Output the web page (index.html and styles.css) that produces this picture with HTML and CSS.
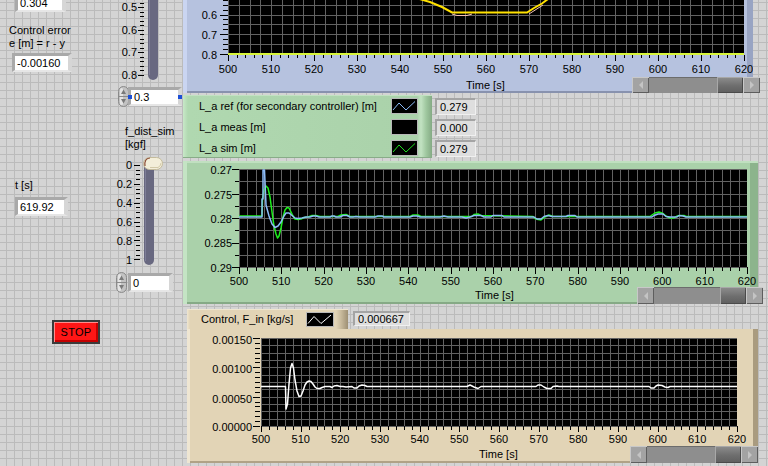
FILE: index.html
```html
<!DOCTYPE html>
<html lang="en">
<head>
<meta charset="utf-8">
<title>Front Panel</title>
<link rel="stylesheet" href="styles.css">
</head>
<body>
<main class="fp">
  <section class="left">
    <div class="colA">
      <div class="num n-top">0.304</div>
      <div class="lbl l-err">Control error<br>e [m] = r - y</div>
      <div class="num n-err">-0.00160</div>
      <div class="lbl l-t">t [s]</div>
      <div class="num n-t">619.92</div>
      <button class="stop" type="button">STOP</button>
    </div>
    <div class="colB">
      <svg class="sl" width="73" height="82" viewBox="110 0 73 82">
        <text x="137" y="11" text-anchor="end">0.5</text>
        <text x="137" y="33.5" text-anchor="end">0.6</text>
        <text x="137" y="56" text-anchor="end">0.7</text>
        <text x="137" y="78.5" text-anchor="end">0.8</text>
        <path class="tk" d="M138 7.5h6M138 30h6M138 52.5h6M138 75h6"/>
        <path class="tk" d="M140 3h4m-4 4.5h4m-4 4.5h4m-4 4.5h4m-4 4.5h4m-4 4.5h4m-4 4.5h4m-4 4.5h4m-4 4.5h4m-4 4.5h4m-4 4.5h4m-4 4.5h4m-4 4.5h4m-4 4.5h4m-4 4.5h4m-4 4.5h4m-4 4.5h4"/>
        <rect x="148" y="-6" width="10" height="86" rx="5" fill="#686880"/>
        <rect x="149" y="-6" width="1" height="81" fill="#7e7e98"/>
      </svg>
      <div class="dig dig1">
        <svg class="ids" width="11" height="21" viewBox="0 0 11 21">
          <rect x="0.5" y="0.5" width="10" height="20" rx="5" fill="#c2c2c2" stroke="#8a8a8a"/>
          <rect x="2" y="2" width="3" height="17" rx="1.5" fill="#e4e4e4"/>
          <path d="M5.5 3.5L8 8H3Z" fill="#7a7a7a"/>
          <path d="M5.5 17.5L8 13H3Z" fill="#7a7a7a"/>
          <path d="M1 10.5H10" stroke="#8a8a8a"/>
        </svg>
        <div class="num n-d1 sel">0.3</div>
      </div>
      <div class="lbl l-fd">f_dist_sim<br>[kgf]</div>
      <svg class="sl sl2" width="73" height="113" viewBox="110 155 73 113">
        <text x="132" y="169" text-anchor="end">0</text>
        <text x="132" y="188" text-anchor="end">0.2</text>
        <text x="132" y="207" text-anchor="end">0.4</text>
        <text x="132" y="226" text-anchor="end">0.6</text>
        <text x="132" y="245" text-anchor="end">0.8</text>
        <text x="132" y="263.5" text-anchor="end">1</text>
        <path class="tk" d="M134 165.5h6m-6 18.87h6m-6 18.87h6m-6 18.87h6m-6 18.87h6m-6 18.87h6"/>
        <path class="tk" d="M136 165.5h4m-4 4.717h4m-4 4.717h4m-4 4.717h4m-4 4.717h4m-4 4.717h4m-4 4.717h4m-4 4.717h4m-4 4.717h4m-4 4.717h4m-4 4.717h4m-4 4.717h4m-4 4.717h4m-4 4.717h4m-4 4.717h4m-4 4.717h4m-4 4.717h4m-4 4.717h4m-4 4.717h4m-4 4.717h4m-4 4.717h4"/>
        <rect x="144" y="160" width="10" height="105" rx="5" fill="#686880"/>
        <rect x="145" y="166" width="1" height="95" fill="#7e7e98"/>
        <rect x="143.5" y="157.5" width="19" height="12" rx="6" fill="#f3eed9" stroke="#c4bb9c"/>
        <path d="M145 166Q144 158.5 150 158" fill="none" stroke="#8a4a36" stroke-width="1.2"/>
        <path d="M150 167.5H158Q161 166 161 163" fill="none" stroke="#d2c9a8"/>
      </svg>
      <div class="dig dig2">
        <svg class="ids" width="11" height="21" viewBox="0 0 11 21">
          <rect x="0.5" y="0.5" width="10" height="20" rx="5" fill="#c2c2c2" stroke="#8a8a8a"/>
          <rect x="2" y="2" width="3" height="17" rx="1.5" fill="#e4e4e4"/>
          <path d="M5.5 3.5L8 8H3Z" fill="#7a7a7a"/>
          <path d="M5.5 17.5L8 13H3Z" fill="#7a7a7a"/>
          <path d="M1 10.5H10" stroke="#8a8a8a"/>
        </svg>
        <div class="num n-d2">0</div>
      </div>
    </div>
  </section>

  <section class="right">
    <div class="graph g-blue">
      <svg class="chart" width="570" height="77" viewBox="183 0 570 77">
        <rect x="228" y="0" width="516" height="55" fill="#000"/>
        <path class="grid" d="M228.5 0V54m10.75 -54v54m10.75 -54v54m10.75 -54v54m10.75 -54v54m10.75 -54v54m10.75 -54v54m10.75 -54v54m10.75 -54v54m10.75 -54v54m10.75 -54v54m10.75 -54v54m10.75 -54v54m10.75 -54v54m10.75 -54v54m10.75 -54v54m10.75 -54v54m10.75 -54v54m10.75 -54v54m10.75 -54v54m10.75 -54v54m10.75 -54v54m10.75 -54v54m10.75 -54v54m10.75 -54v54m10.75 -54v54m10.75 -54v54m10.75 -54v54m10.75 -54v54m10.75 -54v54m10.75 -54v54m10.75 -54v54m10.75 -54v54m10.75 -54v54m10.75 -54v54m10.75 -54v54m10.75 -54v54m10.75 -54v54m10.75 -54v54m10.75 -54v54m10.75 -54v54m10.75 -54v54m10.75 -54v54m10.75 -54v54m10.75 -54v54m10.75 -54v54m10.75 -54v54m10.75 -54v54M228 44.6H744M228 34.75H744M228 24.9H744M228 15H744M228 5.1H744"/>
        <path class="tk" d="M220 54.5h8M220 34.75h8M220 15h8"/>
        <path class="tk" d="M223 54.5h5m-5 -4.9375h5m-5 -4.9375h5m-5 -4.9375h5m-5 -4.9375h5m-5 -4.9375h5m-5 -4.9375h5m-5 -4.9375h5m-5 -4.9375h5m-5 -4.9375h5m-5 -4.9375h5m-5 -4.9375h5"/>
        <path class="tk" d="M228.5 55v3m8.6 -3v3m8.6 -3v3m8.6 -3v3m8.6 -3v3m8.6 -3v3m8.6 -3v3m8.6 -3v3m8.6 -3v3m8.6 -3v3m8.6 -3v3m8.6 -3v3m8.6 -3v3m8.6 -3v3m8.6 -3v3m8.6 -3v3m8.6 -3v3m8.6 -3v3m8.6 -3v3m8.6 -3v3m8.6 -3v3m8.6 -3v3m8.6 -3v3m8.6 -3v3m8.6 -3v3m8.6 -3v3m8.6 -3v3m8.6 -3v3m8.6 -3v3m8.6 -3v3m8.6 -3v3m8.6 -3v3m8.6 -3v3m8.6 -3v3m8.6 -3v3m8.6 -3v3m8.6 -3v3m8.6 -3v3m8.6 -3v3m8.6 -3v3m8.6 -3v3m8.6 -3v3m8.6 -3v3m8.6 -3v3m8.6 -3v3m8.6 -3v3m8.6 -3v3m8.6 -3v3m8.6 -3v3m8.6 -3v3m8.6 -3v3m8.6 -3v3m8.6 -3v3m8.6 -3v3m8.6 -3v3m8.6 -3v3m8.6 -3v3m8.6 -3v3m8.6 -3v3m8.6 -3v3"/>
        <path class="tk" d="M228.5 55v6m43 -6v6m43 -6v6m43 -6v6m43 -6v6m43 -6v6m43 -6v6m43 -6v6m43 -6v6m43 -6v6m43 -6v6m43 -6v6m43 -6v6"/>
        <text x="217" y="19" text-anchor="end">0.6</text>
        <text x="217" y="38.5" text-anchor="end">0.7</text>
        <text x="217" y="58.5" text-anchor="end">0.8</text>
        <g text-anchor="middle">
          <text x="228" y="73">500</text><text x="271" y="73">510</text><text x="314" y="73">520</text><text x="357" y="73">530</text><text x="400" y="73">540</text><text x="443" y="73">550</text><text x="486" y="73">560</text><text x="529" y="73">570</text><text x="572" y="73">580</text><text x="615" y="73">590</text><text x="658" y="73">600</text><text x="701" y="73">610</text><text x="744" y="73">620</text>
        </g>
        <rect x="228" y="53" width="516" height="2" fill="#d8f53a"/>
        <polyline points="416,-2 430,2 442,7 452,12.5 527,12.5 534,8 542,3.5 548,-1" fill="none" stroke="#ffe100" stroke-width="2"/>
        <polyline points="452,14 457,15.5 467,15.5 472,14" fill="none" stroke="#f4c0b4" stroke-width="1"/>
        <polyline points="529,14 536,9.5 543,5" fill="none" stroke="#f4c0b4" stroke-width="1"/>
      </svg>
      <div class="gfoot">
        <span class="xl">Time [s]</span>
        <div class="sb"><span class="sbb l"></span><span class="sbt"><span class="thumb"></span></span><span class="sbb r"></span></div>
      </div>
    </div>

    <div class="legrow">
      <div class="legend">
        <div class="lrow"><span>L_a ref (for secondary controller) [m]</span>
          <svg class="licon" width="27" height="16" viewBox="0 0 27 16"><rect width="27" height="16" fill="#000"/><rect x="0.5" y="0.5" width="26" height="15" fill="none" stroke="#b8b8b8"/><polyline points="2,12 8,5 15,12 24,3.5" fill="none" stroke="#8cbcf8"/></svg></div>
        <div class="lrow"><span>L_a meas [m]</span>
          <svg class="licon" width="27" height="16" viewBox="0 0 27 16"><rect width="27" height="16" fill="#000"/><rect x="0.5" y="0.5" width="26" height="15" fill="none" stroke="#b8b8b8"/></svg></div>
        <div class="lrow"><span>L_a sim [m]</span>
          <svg class="licon" width="27" height="16" viewBox="0 0 27 16"><rect width="27" height="16" fill="#000"/><rect x="0.5" y="0.5" width="26" height="15" fill="none" stroke="#b8b8b8"/><polyline points="2,12 8,5 15,12 24,3.5" fill="none" stroke="#1ee01e"/></svg></div>
      </div>
      <div class="legvals">
        <div class="numg">0.279</div>
        <div class="numg">0.000</div>
        <div class="numg">0.279</div>
      </div>
    </div>

    <div class="graph g-green">
      <svg class="chart" width="575" height="126" viewBox="183 161 575 126">
        <rect x="239" y="169" width="508" height="98" fill="#000"/>
        <path class="grid" d="M239.5 169V267m8.4667 -98v98m8.4667 -98v98m8.4667 -98v98m8.4667 -98v98m8.4667 -98v98m8.4667 -98v98m8.4667 -98v98m8.4667 -98v98m8.4667 -98v98m8.4667 -98v98m8.4667 -98v98m8.4667 -98v98m8.4667 -98v98m8.4667 -98v98m8.4667 -98v98m8.4667 -98v98m8.4667 -98v98m8.4667 -98v98m8.4667 -98v98m8.4667 -98v98m8.4667 -98v98m8.4667 -98v98m8.4667 -98v98m8.4667 -98v98m8.4667 -98v98m8.4667 -98v98m8.4667 -98v98m8.4667 -98v98m8.4667 -98v98m8.4667 -98v98m8.4667 -98v98m8.4667 -98v98m8.4667 -98v98m8.4667 -98v98m8.4667 -98v98m8.4667 -98v98m8.4667 -98v98m8.4667 -98v98m8.4667 -98v98m8.4667 -98v98m8.4667 -98v98m8.4667 -98v98m8.4667 -98v98m8.4667 -98v98m8.4667 -98v98m8.4667 -98v98m8.4667 -98v98m8.4667 -98v98m8.4667 -98v98m8.4667 -98v98m8.4667 -98v98m8.4667 -98v98m8.4667 -98v98m8.4667 -98v98m8.4667 -98v98m8.4667 -98v98m8.4667 -98v98m8.4667 -98v98m8.4667 -98v98M239 169.5h508m-508 12.25h508m-508 12.25h508m-508 12.25h508m-508 12.25h508m-508 12.25h508m-508 12.25h508m-508 12.25h508m-508 12.25h508"/>
        <path class="tk" d="M232 169.5h7m-7 24.5h7m-7 24.5h7m-7 24.5h7m-7 24.5h7"/>
        <path class="tk" d="M235 181.75h4m-4 24.5h4m-4 24.5h4m-4 24.5h4"/>
        <path class="tk" d="M239.5 267v4m8.4667 -4v4m8.4667 -4v4m8.4667 -4v4m8.4667 -4v4m8.4667 -4v4m8.4667 -4v4m8.4667 -4v4m8.4667 -4v4m8.4667 -4v4m8.4667 -4v4m8.4667 -4v4m8.4667 -4v4m8.4667 -4v4m8.4667 -4v4m8.4667 -4v4m8.4667 -4v4m8.4667 -4v4m8.4667 -4v4m8.4667 -4v4m8.4667 -4v4m8.4667 -4v4m8.4667 -4v4m8.4667 -4v4m8.4667 -4v4m8.4667 -4v4m8.4667 -4v4m8.4667 -4v4m8.4667 -4v4m8.4667 -4v4m8.4667 -4v4m8.4667 -4v4m8.4667 -4v4m8.4667 -4v4m8.4667 -4v4m8.4667 -4v4m8.4667 -4v4m8.4667 -4v4m8.4667 -4v4m8.4667 -4v4m8.4667 -4v4m8.4667 -4v4m8.4667 -4v4m8.4667 -4v4m8.4667 -4v4m8.4667 -4v4m8.4667 -4v4m8.4667 -4v4m8.4667 -4v4m8.4667 -4v4m8.4667 -4v4m8.4667 -4v4m8.4667 -4v4m8.4667 -4v4m8.4667 -4v4m8.4667 -4v4m8.4667 -4v4m8.4667 -4v4m8.4667 -4v4m8.4667 -4v4"/>
        <path class="tk" d="M239.5 267v7m42.333 -7v7m42.333 -7v7m42.333 -7v7m42.333 -7v7m42.333 -7v7m42.333 -7v7m42.333 -7v7m42.333 -7v7m42.333 -7v7m42.333 -7v7m42.333 -7v7m42.333 -7v7"/>
        <g text-anchor="end">
          <text x="232" y="174">0.27</text><text x="232" y="198.5">0.275</text><text x="232" y="222.5">0.28</text><text x="232" y="247">0.285</text><text x="232" y="271.5">0.29</text>
        </g>
        <g text-anchor="middle">
          <text x="239" y="285">500</text><text x="281.3" y="285">510</text><text x="323.7" y="285">520</text><text x="366" y="285">530</text><text x="408.3" y="285">540</text><text x="450.7" y="285">550</text><text x="493" y="285">560</text><text x="535.3" y="285">570</text><text x="577.7" y="285">580</text><text x="620" y="285">590</text><text x="662.3" y="285">600</text><text x="704.7" y="285">610</text><text x="747" y="285">620</text>
        </g>
        <polyline class="tr" stroke="#1ef01e" stroke-width="1.5" points="239,216 262,216 262.5,199 264,190 266,186 268,188 270,197 272,212 274,226 276,234 277.5,238 279,236 281,228 283,217 285,210 287,207.5 289,208 291,212 293,216 295,219 298,219.5 301,219 304,217.5 308,217 312,215.5 316,215.5 320,216.5 338,216.5 341,215 346,214.5 350,216.5 410,216.5 413,215 418,215 421,216.5 472,216.5 474,214.5 478,214 481,215.5 533,216.5 535,218.5 538,219.5 541,220 545,217 549,215 553,216.5 650,216.5 652,215 655,213 659,212 663,213.5 666,216 670,218 674,218 677,216 680,215.5 684,215.5 686,216.5 747,216.5"/>
        <polyline class="tr" stroke="#8cbcf8" stroke-width="1.5" points="239,217 262,217 262,199 263,199 263,170 264.5,170 266,205 269,216 272,224 275,227.5 278,226 281,222 284,216 286,213 289,213 292,215.5 295,218 298,218.5 302,218 306,217 310,217 313,216 316,216 319,217 330,217 332,216 334,216 336,217 340,217 343,215.5 347,215.5 350,217 353,217 356,216.5 360,217 375,217 378,216 382,216 384,217 410,217 413,216 417,216 420,217 440,217 444,216 448,217 462,217 466,218 470,217 474,215.5 481,215.5 484,217 491,217 493,215.5 502,215.5 504,217 534,217 537,219 541,219 544,216.5 548,215.5 552,216.5 566,216.5 568,215.5 575,215.5 577,217 652,217 654,215.5 658,214 663,214 666,216.5 670,217 677,217 679,215.5 683,216 686,217 747,217"/>
      </svg>
      <div class="gfoot">
        <span class="xl">Time [s]</span>
        <div class="sb"><span class="sbb l"></span><span class="sbt"><span class="thumb"></span></span><span class="sbb r"></span></div>
      </div>
    </div>

    <div class="ctrlhead">
      <div class="tab"><span>Control, F_in [kg/s]</span>
        <svg class="licon" width="28" height="15" viewBox="0 0 28 15"><rect width="28" height="15" fill="#000"/><rect x="0.5" y="0.5" width="27" height="14" fill="none" stroke="#b8b8b8"/><polyline points="2,11.5 8,4.5 15,11.5 25,3" fill="none" stroke="#ffffff"/></svg>
      </div>
      <div class="numg nctl">0.000667</div>
    </div>

    <div class="graph g-tan">
      <svg class="chart" width="571" height="117" viewBox="187 329 571 117">
        <rect x="261" y="338" width="476" height="88" fill="#000"/>
        <path class="grid" d="M261.5 338V426m7.9333 -88v88m7.9333 -88v88m7.9333 -88v88m7.9333 -88v88m7.9333 -88v88m7.9333 -88v88m7.9333 -88v88m7.9333 -88v88m7.9333 -88v88m7.9333 -88v88m7.9333 -88v88m7.9333 -88v88m7.9333 -88v88m7.9333 -88v88m7.9333 -88v88m7.9333 -88v88m7.9333 -88v88m7.9333 -88v88m7.9333 -88v88m7.9333 -88v88m7.9333 -88v88m7.9333 -88v88m7.9333 -88v88m7.9333 -88v88m7.9333 -88v88m7.9333 -88v88m7.9333 -88v88m7.9333 -88v88m7.9333 -88v88m7.9333 -88v88m7.9333 -88v88m7.9333 -88v88m7.9333 -88v88m7.9333 -88v88m7.9333 -88v88m7.9333 -88v88m7.9333 -88v88m7.9333 -88v88m7.9333 -88v88m7.9333 -88v88m7.9333 -88v88m7.9333 -88v88m7.9333 -88v88m7.9333 -88v88m7.9333 -88v88m7.9333 -88v88m7.9333 -88v88m7.9333 -88v88m7.9333 -88v88m7.9333 -88v88m7.9333 -88v88m7.9333 -88v88m7.9333 -88v88m7.9333 -88v88m7.9333 -88v88m7.9333 -88v88m7.9333 -88v88m7.9333 -88v88m7.9333 -88v88M261 338.5h476m-476 7.3333h476m-476 7.3333h476m-476 7.3333h476m-476 7.3333h476m-476 7.3333h476m-476 7.3333h476m-476 7.3333h476m-476 7.3333h476m-476 7.3333h476m-476 7.3333h476m-476 7.3333h476m-476 7.3333h476"/>
        <path class="tk" d="M253 338.5h7m-7 29.333h7m-7 29.333h7m-7 29.333h7"/>
        <path class="tk" d="M255 338.5h5m-5 4.8889h5m-5 4.8889h5m-5 4.8889h5m-5 4.8889h5m-5 4.8889h5m-5 4.8889h5m-5 4.8889h5m-5 4.8889h5m-5 4.8889h5m-5 4.8889h5m-5 4.8889h5m-5 4.8889h5m-5 4.8889h5m-5 4.8889h5m-5 4.8889h5m-5 4.8889h5m-5 4.8889h5m-5 4.8889h5"/>
        <path class="tk" d="M261.5 426v4m7.9333 -4v4m7.9333 -4v4m7.9333 -4v4m7.9333 -4v4m7.9333 -4v4m7.9333 -4v4m7.9333 -4v4m7.9333 -4v4m7.9333 -4v4m7.9333 -4v4m7.9333 -4v4m7.9333 -4v4m7.9333 -4v4m7.9333 -4v4m7.9333 -4v4m7.9333 -4v4m7.9333 -4v4m7.9333 -4v4m7.9333 -4v4m7.9333 -4v4m7.9333 -4v4m7.9333 -4v4m7.9333 -4v4m7.9333 -4v4m7.9333 -4v4m7.9333 -4v4m7.9333 -4v4m7.9333 -4v4m7.9333 -4v4m7.9333 -4v4m7.9333 -4v4m7.9333 -4v4m7.9333 -4v4m7.9333 -4v4m7.9333 -4v4m7.9333 -4v4m7.9333 -4v4m7.9333 -4v4m7.9333 -4v4m7.9333 -4v4m7.9333 -4v4m7.9333 -4v4m7.9333 -4v4m7.9333 -4v4m7.9333 -4v4m7.9333 -4v4m7.9333 -4v4m7.9333 -4v4m7.9333 -4v4m7.9333 -4v4m7.9333 -4v4m7.9333 -4v4m7.9333 -4v4m7.9333 -4v4m7.9333 -4v4m7.9333 -4v4m7.9333 -4v4m7.9333 -4v4m7.9333 -4v4"/>
        <path class="tk" d="M261.5 426v6m39.667 -6v6m39.667 -6v6m39.667 -6v6m39.667 -6v6m39.667 -6v6m39.667 -6v6m39.667 -6v6m39.667 -6v6m39.667 -6v6m39.667 -6v6m39.667 -6v6m39.667 -6v6"/>
        <g text-anchor="end">
          <text x="252" y="344">0.00150</text><text x="252" y="373.3">0.00100</text><text x="252" y="402.7">0.00050</text><text x="252" y="430.5">0.00000</text>
        </g>
        <g text-anchor="middle">
          <text x="261" y="442.5">500</text><text x="300.7" y="442.5">510</text><text x="340.3" y="442.5">520</text><text x="380" y="442.5">530</text><text x="419.7" y="442.5">540</text><text x="459.3" y="442.5">550</text><text x="499" y="442.5">560</text><text x="538.7" y="442.5">570</text><text x="578.3" y="442.5">580</text><text x="618" y="442.5">590</text><text x="657.7" y="442.5">600</text><text x="697.3" y="442.5">610</text><text x="737" y="442.5">620</text>
        </g>
        <polyline class="tr" stroke="#ffffff" stroke-width="1.5" points="261,386.5 285.5,386.5 286,409 287.5,404 289,384 290.5,368 292,363.5 293.5,368 295,380 297,391 299,396.5 301,396 303,391 305,385 307,382 309,381 311,381.5 313,384 315,387 317,388.5 320,388.5 322,387.5 325,386.5 330,386.5 332,387.5 334,386 337,385.5 340,386.5 343,386.5 346,387 352,386.5 354,388 357,388 359,386 362,385 365,385.5 367,386.5 467,386.5 470,385 474,387 478,388.5 481,386.5 536,386.5 538,385 541,385 544,387 547,388.5 551,388.5 553,386.5 557,386 559,386.5 649,386.5 651,388 654,388 656,386 658,385 662,385.5 665,387 668,387.5 670,386.5 737,386.5"/>
      </svg>
      <div class="gfoot">
        <span class="xl">Time [s]</span>
        <div class="sb"><span class="sbb l"></span><span class="sbt"><span class="thumb"></span></span><span class="sbb r"></span></div>
      </div>
    </div>
  </section>
</main>
</body>
</html>
```

FILE: styles.css
```css
* { box-sizing: border-box; }
html, body { margin: 0; padding: 0; }
body {
  width: 768px;
  height: 466px;
  overflow: hidden;
  font: 11px/13px "Liberation Sans", Arial, sans-serif;
  color: #000;
  background-color: #d4d4d4;
  background-image:
    linear-gradient(#bbbbbb 1px, transparent 1px),
    linear-gradient(90deg, #bbbbbb 1px, transparent 1px);
  background-size: 8px 8px;
  background-position: 6px 2px;
}
svg text {
  font-family: "Liberation Sans", Arial, sans-serif;
  font-size: 11px;
  fill: #000;
}
.tk { stroke: #000; stroke-width: 1; fill: none; shape-rendering: crispEdges; }
.grid { stroke: #626262; stroke-width: 1; fill: none; shape-rendering: crispEdges; }
.tr { fill: none; stroke-linejoin: round; }

.fp { display: flex; width: 768px; height: 466px; }

/* left controls */
.left { width: 183px; flex: none; display: flex; }
.colA { width: 110px; flex: none; display: flex; flex-direction: column; align-items: flex-start; }
.colB { width: 73px; flex: none; display: flex; flex-direction: column; align-items: flex-start; }
.lbl { white-space: nowrap; line-height: 13px; }

.num {
  height: 19px;
  border-style: solid;
  border-width: 3px 4px 2px 3px;
  border-color: #a9a9a9 #d6d6d6 #e6e6e6 #a9a9a9;
  background: #fff;
  padding-left: 2px;
  line-height: 14px;
  white-space: nowrap;
  position: relative;
}
.n-top { width: 51px; margin: -7px 0 0 15px; }
.l-err { margin: 12px 0 0 9px; }
.n-err { width: 60px; margin: 3px 0 0 12px; }
.l-t { margin: 107px 0 0 15px; }
.n-t { width: 53px; margin: 5px 0 0 15px; }

.stop {
  width: 48px;
  height: 24px;
  margin: 104px 0 0 52px;
  padding: 0;
  background: #fe1616;
  border: 2px solid #3a3a3a;
  box-shadow: inset 1px 1px 0 #ff8c8c, inset -2px -2px 0 #c40000;
  font: 11px "Liberation Sans", Arial, sans-serif;
  color: #000;
  letter-spacing: 0.3px;
}

.sl { display: block; }
.dig { display: flex; align-items: center; }
.ids { display: block; flex: none; }
.dig1 { margin: 4px 0 0 8px; }
.dig1 .num { width: 54px; margin-left: -1px; padding-left: 3px; }
.dig2 { margin: 4px 0 0 6px; }
.dig2 .num { width: 45px; margin-left: 1px; padding-left: 2px; }
.sel::before, .sel::after {
  content: "";
  position: absolute;
  top: 5px;
  width: 4px;
  height: 4px;
  background: #1c4fd6;
}
.sel::before { left: -3px; }
.sel::after { right: -4px; }
.l-fd { margin: 18px 0 0 15px; }
.sl2 { margin-top: 4px; }

/* right column */
.right { width: 585px; flex: none; display: flex; flex-direction: column; align-items: flex-start; }
.graph { display: flex; flex-direction: column; flex: none; }
.chart { display: block; flex: none; }
.gfoot { display: flex; align-items: center; flex: 1; }
.xl { white-space: nowrap; }

.sb { margin-left: auto; display: flex; height: 17px; flex: none; }
.sbb {
  width: 17px;
  flex: none;
  background: #a3a3a3;
  box-shadow: inset 1px 1px 0 #c8c8c8, inset -1px -1px 0 #5e5e5e;
  display: flex;
  align-items: center;
  justify-content: center;
}
.sbb::before { content: ""; border: 4px solid transparent; }
.sbb.l::before { border-left-width: 0; border-right: 4px solid #c4c4c4; }
.sbb.r::before { border-right-width: 0; border-left: 4px solid #c4c4c4; }
.sbt {
  flex: 1;
  display: flex;
  justify-content: flex-end;
  background: #8e8e8e;
  box-shadow: inset 0 1px 0 #6c6c6c;
}
.thumb {
  width: 26px;
  background: linear-gradient(#8e8e8e, #6e6e6e 55%, #5e5e5e);
  box-shadow: inset 1px 1px 0 #a8a8a8, inset -1px -1px 0 #4a4a4a;
}

.g-blue {
  width: 570px;
  height: 93px;
  background: #b6c2df;
  box-shadow: inset 4px 0 0 #cad5f1, inset -6px 0 0 #98a4c3, inset 0 -2px 0 #8892ae;
}
.g-blue .xl { margin-left: 283px; }
.g-blue .sb { width: 128px; height: 16px; margin-right: -7px; }

.legrow { display: flex; margin-top: 2px; height: 63px; flex: none; }
.legend {
  width: 249px;
  height: 63px;
  padding: 3px 14px 0 16px;
  background: linear-gradient(90deg, #c8e8c8 0, #b0d8b0 5px, #aad2aa 234px, #c2e2c2 238px, #a0c8a0 243px, #84aa84 249px);
  box-shadow: inset 0 1px 0 #c2e2c2, inset 0 -1px 0 #88ac88;
}
.lrow { display: flex; align-items: flex-start; height: 21px; }
.lrow span { line-height: 16px; white-space: nowrap; }
.licon { display: block; margin-left: auto; flex: none; }
.legvals { display: flex; flex-direction: column; gap: 4px; padding-top: 3px; margin-left: 3px; }
.numg {
  width: 41px;
  height: 17px;
  background: #dedede;
  border-style: solid;
  border-width: 2px 1px 1px 2px;
  border-color: #a4a4a4 #f0f0f0 #f0f0f0 #a4a4a4;
  padding-left: 3px;
  line-height: 14px;
  white-space: nowrap;
}

.g-green {
  width: 575px;
  height: 143px;
  margin-top: 3px;
  background: #aad1aa;
  box-shadow: inset 4px 0 0 #c4e4c4, inset 0 2px 0 #c0e0c0, inset -8px 0 0 #8cb48c, inset 0 -2px 0 #86aa86;
}
.g-green .xl { margin-left: 292px; }
.g-green .sb { width: 126px; margin-right: -5px; }

.ctrlhead { display: flex; align-items: flex-start; margin: 5px 0 0 4px; height: 20px; flex: none; }
.tab {
  width: 161px;
  height: 20px;
  display: flex;
  align-items: center;
  padding: 0 14px;
  white-space: nowrap;
  background: linear-gradient(90deg, #efe6d0 0, #e2d4b6 3px, #e2d4b6 149px, #c8ba9c 154px, #9e9074 161px);
  box-shadow: inset 0 1px 0 #efe6d0;
}
.nctl { width: 57px; height: 15px; margin: 2px 0 0 5px; line-height: 12px; }

.g-tan {
  width: 571px;
  height: 134px;
  margin-left: 4px;
  background: #e2d4b6;
  box-shadow: inset 3px 0 0 #efe6d2, inset -5px 0 0 #a99b7f, inset 0 -2px 0 #b0a286;
}
.g-tan .xl { margin-left: 292px; }
.g-tan .sb { width: 128px; }
```
